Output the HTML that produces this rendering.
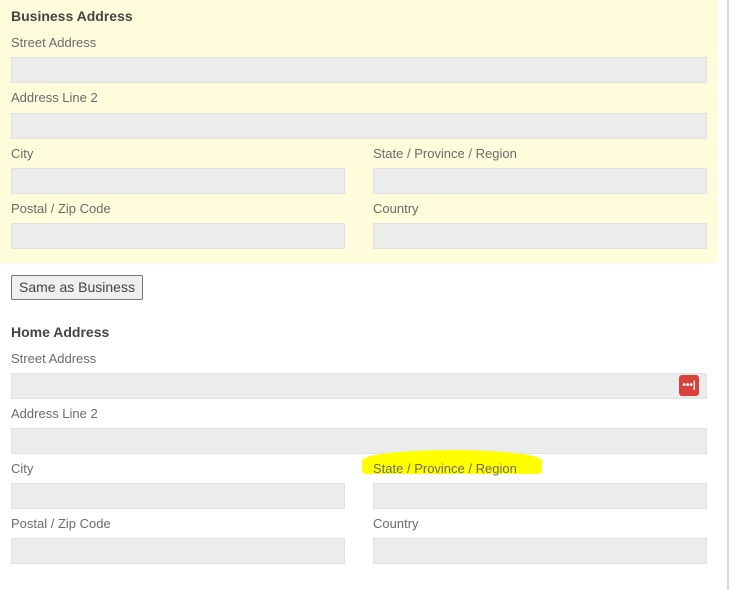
<!DOCTYPE html>
<html><head><meta charset="utf-8"><style>
body{margin:0;width:740px;height:590px;background:#fff;position:relative;overflow:hidden;font-family:"Liberation Sans",Arial,sans-serif;}
.bg{position:absolute;left:0;top:0;width:718px;height:263px;background:#fffcdc;}
.sb{position:absolute;left:727px;top:0;width:2px;height:590px;background:#dcdcdc;}
.h{position:absolute;left:11px;font-size:14px;font-weight:bold;color:#444;}
.l{position:absolute;font-size:13px;color:#6b6b6b;}
.i{position:absolute;height:24px;background:#ececec;border:1px solid #e0e0e0;}
.f{left:11px;width:694px;}
.a{left:11px;width:332px;}
.b{left:373px;width:332px;}
.btn{position:absolute;left:11px;top:275px;width:130px;height:23px;border:1px solid #767676;border-radius:2px;background:#efefef;font-size:14px;color:#444;text-align:center;line-height:23px;}
.hl{position:absolute;left:362px;top:450px;width:180px;height:24px;background:#ffff00;border-radius:50% 50% 4px 4px/45% 45% 4px 4px;}
.lp{position:absolute;left:679px;top:375px;width:20px;height:21px;background:#d9413b;border-radius:3px;color:#fff;font-size:10px;line-height:21px;text-align:center;font-weight:bold;}
</style></head><body>
<div class="bg"></div>
<div class="sb"></div>
<div class="h" style="top:8px">Business Address</div>
<div class="l" style="left:11px;top:35px">Street Address</div>
<div class="i f" style="top:57px"></div>
<div class="l" style="left:11px;top:90px">Address Line 2</div>
<div class="i f" style="top:113px"></div>
<div class="l" style="left:11px;top:146px">City</div>
<div class="l" style="left:373px;top:146px">State / Province / Region</div>
<div class="i a" style="top:168px"></div>
<div class="i b" style="top:168px"></div>
<div class="l" style="left:11px;top:201px">Postal / Zip Code</div>
<div class="l" style="left:373px;top:201px">Country</div>
<div class="i a" style="top:223px"></div>
<div class="i b" style="top:223px"></div>

<div class="btn">Same as Business</div>

<div class="h" style="top:324px">Home Address</div>
<div class="l" style="left:11px;top:351px">Street Address</div>
<div class="i f" style="top:373px"></div>
<div class="lp">•••|</div>
<div class="l" style="left:11px;top:406px">Address Line 2</div>
<div class="i f" style="top:428px"></div>
<div class="hl"></div>
<div class="l" style="left:11px;top:461px">City</div>
<div class="l" style="left:373px;top:461px">State / Province / Region</div>
<div class="i a" style="top:483px"></div>
<div class="i b" style="top:483px"></div>
<div class="l" style="left:11px;top:516px">Postal / Zip Code</div>
<div class="l" style="left:373px;top:516px">Country</div>
<div class="i a" style="top:538px"></div>
<div class="i b" style="top:538px"></div>
</body></html>
